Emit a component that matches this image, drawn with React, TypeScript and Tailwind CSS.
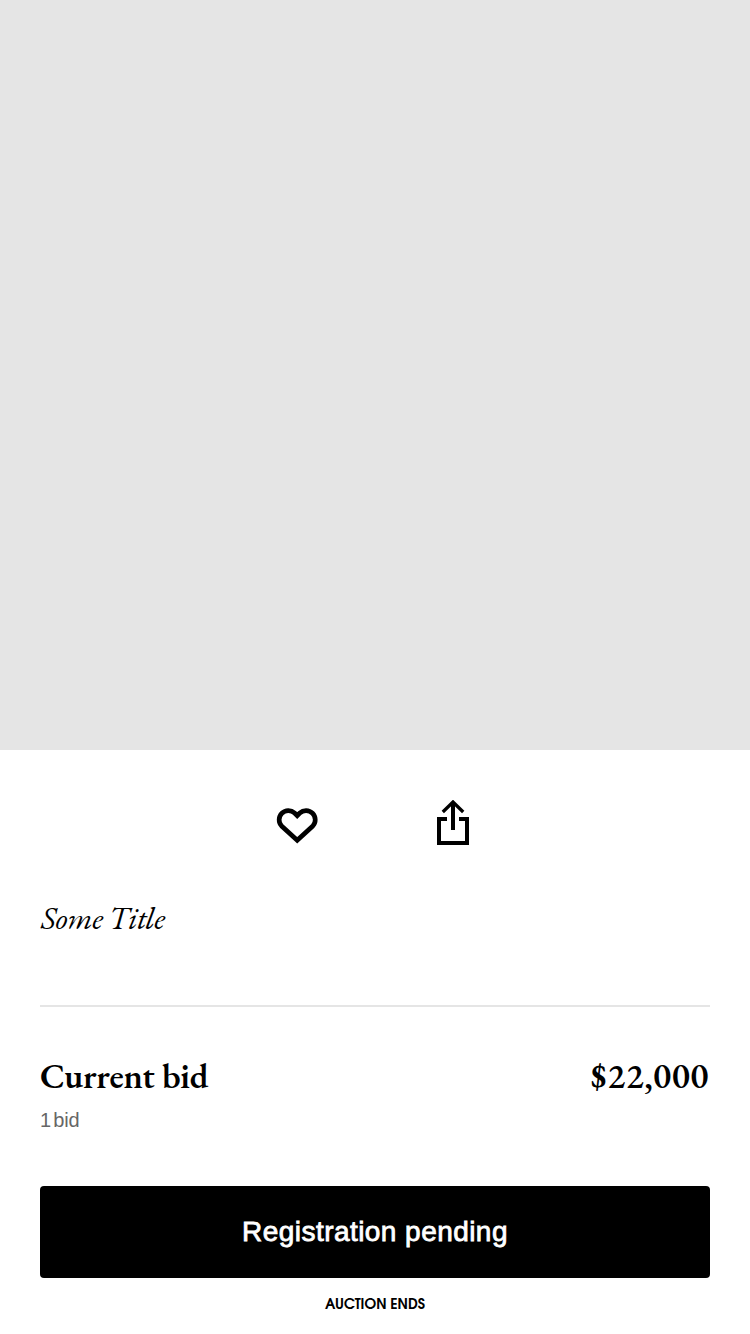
export default function App() {
  return (
    <main className="flex h-[1334px] w-[750px] flex-col overflow-hidden bg-white font-['EB_Garamond','Liberation_Serif',serif] text-black">
      <div className="h-[750px] shrink-0 bg-[#e5e5e5]" />
      <div className="flex h-[146px] shrink-0 pt-[50px]">
        <button aria-label="Save" className="ml-[276px] h-[46px] w-[43px]">
          <svg width="43" height="46" viewBox="0 0 43 46" fill="none" stroke="black" strokeWidth="4.7">
            <path d="M21.200 40.200 5.600 26A9.200 9.200 0 0 1 18.600 13L21.200 15.600 23.800 13A9.200 9.200 0 0 1 36.800 26Z" />
          </svg>
        </button>
        <button aria-label="Share" className="ml-[117px] h-[46px] w-[34px]">
          <svg width="34" height="46" viewBox="0 0 34 46" fill="none" stroke="black" strokeWidth="4">
            <path d="M11 19H3v24h28V19h-8M17 30V3" />
            <path d="M6.800 12 17 2l10.200 10" strokeWidth="3.3" />
          </svg>
        </button>
      </div>
      <section className="mx-10 flex h-[111px] shrink-0 items-start border-b-2 border-[#e5e5e5]">
        <h1 className="pl-px text-[32px] leading-[45px] tracking-[-0.4px] italic">Some Title</h1>
      </section>
      <section className="mx-10 flex h-[179px] shrink-0 flex-col pt-[46px]">
        <div className="flex justify-between text-[35px] leading-[46px] font-semibold">
          <span className="tracking-[-0.25px]">Current bid</span>
          <span className="pr-px tracking-[0.6px]">$22,000</span>
        </div>
        <span className="pt-px font-['Liberation_Sans',sans-serif] text-[20px] leading-[40px] tracking-[-0.2px] text-[#666] [word-spacing:-3px]">1 bid</span>
      </section>
      <button className="mx-10 h-[92px] shrink-0 rounded-[4px] bg-black pb-px font-['Liberation_Sans',sans-serif] text-[28px] tracking-[0.45px] text-white [-webkit-text-stroke:0.8px_white]">Registration pending</button>
      <p className="pt-[18px] text-center font-['URW_Gothic','TeX_Gyre_Adventor','Lato',sans-serif] text-[14px] leading-[20px] font-bold tracking-[-0.05px]">AUCTION ENDS</p>
    </main>
  );
}
